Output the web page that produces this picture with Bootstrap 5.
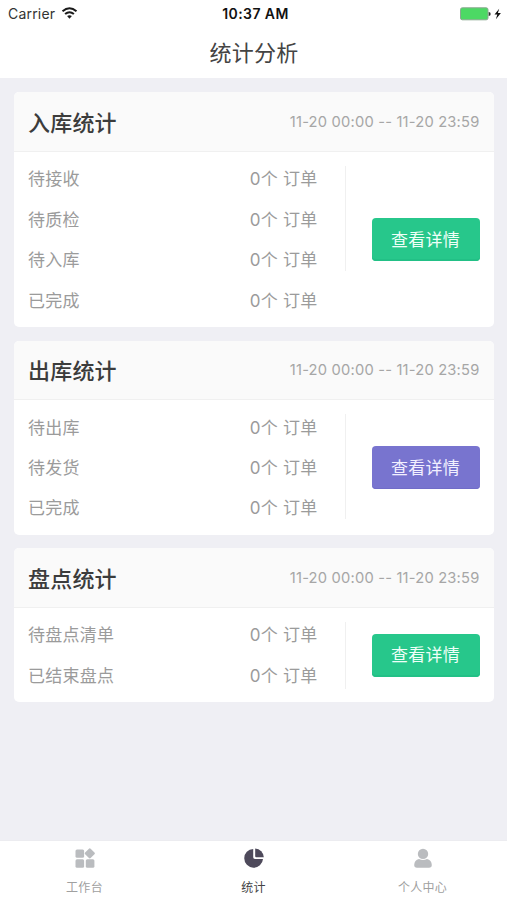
<!DOCTYPE html>
<html lang="zh-CN">
<head>
<meta charset="utf-8">
<meta name="viewport" content="width=device-width, initial-scale=1">
<title>统计分析</title>
<link href="https://cdn.jsdelivr.net/npm/bootstrap@5.3.0/dist/css/bootstrap.min.css" rel="stylesheet">
<style>
body{font-family:Inter,"Noto Sans CJK SC",sans-serif;background:#efeff4;color:#444;line-height:1.2}
.status{height:28px;font-size:14px;color:#111;padding:0 5px 0 8px}
.status .carrier{font-size:14px;letter-spacing:.2px;color:#333}
.status .clock{font-size:14px;font-weight:600;letter-spacing:.4px;padding-left:1px}
.page-title{height:50px;font-size:22px;font-weight:400;color:#444;letter-spacing:.2px;padding-left:1px}
.stats{padding:14.4px 13.5px 0 14px;gap:13.6px}
.stat{border:0;border-radius:5px;overflow:hidden}
.stat-head{height:59.4px;background:#fafafa;border-bottom:1px solid #f0f0f0;padding:3px 14px 0}
.stat-title{font-size:22px;font-weight:500;color:#3c3c3c;letter-spacing:.2px}
.stat-date{font-size:14.7px;color:#a6a6a6;letter-spacing:.2px}
.stat-body{padding:7.3px 14px 6.3px}
.stat-rows{width:289.5px}
.stat-row{height:40.4px;font-size:17px;color:#9b9b9b;letter-spacing:.25px;padding-top:.6px}
.rule{width:1px;background:#f0f0f0;margin:7px 0 0 27.5px;max-height:105px}
.rule-short{margin-bottom:7px}
.btn-detail{width:108px;height:43px;border:0;border-radius:4px;padding:1px 0 0;font-size:17px;letter-spacing:.3px;color:#effff8}
.btn-green,.btn-green:hover{background:#27c78b;box-shadow:inset 0 -2px #22c086}
.btn-violet,.btn-violet:hover{background:#7874cf;box-shadow:inset 0 -1px #706cc8;color:#f2f0ff}
.tabs{height:60px;background:#fff;border-top:1px solid #ececf0}
.tab-item{color:#a0a0a0;font-size:12px;padding-top:7px;gap:12.5px;letter-spacing:.3px}
.tab-item.current{color:#444}
</style>
<script src="https://cdn.jsdelivr.net/npm/bootstrap@5.3.0/dist/js/bootstrap.bundle.min.js"></script>
</head>
<body class="d-flex flex-column vh-100 overflow-hidden">
<header class="bg-white">
  <div class="status row g-0 align-items-center">
    <div class="col d-flex align-items-center"><span class="carrier">Carrier</span>
      <svg class="ms-1" width="20" height="14" viewBox="-2.5 0 20 14" fill="none" stroke="#1a1a1a" stroke-width="2"><path d="M1 4.2Q8-1.7 15 4.2M3.6 7.1Q8 3.3 12.4 7.1"/><path d="M5.6 9.1Q8 7.2 10.4 9.1L8 11.8Z" fill="#1a1a1a" stroke="none"/></svg>
    </div>
    <div class="col-auto clock">10:37 AM</div>
    <div class="col d-flex justify-content-end align-items-center">
      <svg width="42" height="14" viewBox="0 0 42 14"><rect x=".5" y=".8" width="27.5" height="12" rx="1.8" fill="#4cd964" stroke="#8aa891"/><path d="M28.7 5q2 .2 2 2t-2 2z" fill="#333"/><path d="M39.2 1.8 34.5 7.6h2.8l-1.4 4.7 5-6.2h-3z" fill="#111"/></svg>
    </div>
  </div>
  <h1 class="page-title d-flex align-items-center justify-content-center m-0">统计分析</h1>
</header>
<main class="stats d-flex flex-column flex-grow-1">
  <section class="stat card">
    <div class="stat-head d-flex align-items-center justify-content-between"><h2 class="stat-title m-0">入库统计</h2><span class="stat-date">11-20 00:00 -- 11-20 23:59</span></div>
    <div class="stat-body d-flex">
      <div class="stat-rows">
        <div class="stat-row d-flex align-items-center justify-content-between"><span>待接收</span><span>0个 订单</span></div>
        <div class="stat-row d-flex align-items-center justify-content-between"><span>待质检</span><span>0个 订单</span></div>
        <div class="stat-row d-flex align-items-center justify-content-between"><span>待入库</span><span>0个 订单</span></div>
        <div class="stat-row d-flex align-items-center justify-content-between"><span>已完成</span><span>0个 订单</span></div>
      </div>
      <div class="rule"></div>
      <button class="btn btn-detail btn-green ms-auto align-self-center" type="button">查看详情</button>
    </div>
  </section>
  <section class="stat card">
    <div class="stat-head d-flex align-items-center justify-content-between"><h2 class="stat-title m-0">出库统计</h2><span class="stat-date">11-20 00:00 -- 11-20 23:59</span></div>
    <div class="stat-body d-flex">
      <div class="stat-rows">
        <div class="stat-row d-flex align-items-center justify-content-between"><span>待出库</span><span>0个 订单</span></div>
        <div class="stat-row d-flex align-items-center justify-content-between"><span>待发货</span><span>0个 订单</span></div>
        <div class="stat-row d-flex align-items-center justify-content-between"><span>已完成</span><span>0个 订单</span></div>
      </div>
      <div class="rule"></div>
      <button class="btn btn-detail btn-violet ms-auto align-self-center" type="button">查看详情</button>
    </div>
  </section>
  <section class="stat card">
    <div class="stat-head d-flex align-items-center justify-content-between"><h2 class="stat-title m-0">盘点统计</h2><span class="stat-date">11-20 00:00 -- 11-20 23:59</span></div>
    <div class="stat-body d-flex">
      <div class="stat-rows">
        <div class="stat-row d-flex align-items-center justify-content-between"><span>待盘点清单</span><span>0个 订单</span></div>
        <div class="stat-row d-flex align-items-center justify-content-between"><span>已结束盘点</span><span>0个 订单</span></div>
      </div>
      <div class="rule rule-short"></div>
      <button class="btn btn-detail btn-green ms-auto align-self-center" type="button">查看详情</button>
    </div>
  </section>
</main>
<nav class="tabs row g-0 flex-shrink-0">
  <a class="tab-item col d-flex flex-column align-items-center text-decoration-none" href="#">
    <svg width="20" height="20" viewBox="0 0 20 20" fill="#babcbf"><rect x=".5" y="1.4" width="8.6" height="8.4" rx="1.5"/><rect x="10.9" y="1.4" width="7.8" height="7.8" rx="1.2" transform="rotate(45 14.8 5.3)"/><rect x=".5" y="11.3" width="8.6" height="8.4" rx="1.5"/><rect x="10.8" y="11.3" width="8.6" height="8.4" rx="1.5"/></svg>
    <span>工作台</span></a>
  <a class="tab-item current col d-flex flex-column align-items-center text-decoration-none" href="#">
    <svg width="20" height="20" viewBox="0 0 20 20" fill="#4e4a5b"><path d="M9.2.9A9.4 9.4 0 1 0 19 11H11Q9.2 11 9.2 9.2Z"/><path d="M11.2.4A9.1 9.1 0 0 1 19.8 9.2H12.2Q11.2 9.2 11.2 8.2Z"/></svg>
    <span>统计</span></a>
  <a class="tab-item col d-flex flex-column align-items-center text-decoration-none" href="#">
    <svg width="20" height="20" viewBox="0 0 20 20" fill="#babcbf"><circle cx="10" cy="5.9" r="5.2"/><path d="M1.2 17Q1.4 12 6 10.9Q10 12.9 14 10.9Q18.6 12 18.8 17Q18.8 19.8 16 19.8H4Q1.2 19.8 1.2 17Z"/></svg>
    <span>个人中心</span></a>
</nav>
</body>
</html>
